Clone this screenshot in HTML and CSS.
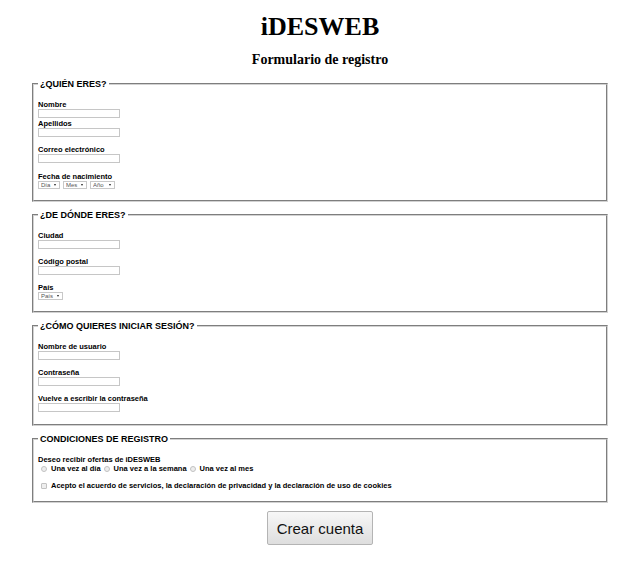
FILE: index.html
```html
<!DOCTYPE html>
<html lang="es">
<head>
<meta charset="utf-8">
<title>iDESWEB - Formulario de registro</title>
<link rel="stylesheet" href="styles.css">
</head>
<body>
<header class="top">
  <h1 class="brand">iDESWEB</h1>
  <h2 class="subtitle">Formulario de registro</h2>
</header>
<form class="form">
  <fieldset class="group">
    <legend class="group-title">¿QUIÉN ERES?</legend>
    <div class="group-body">
      <div class="field-pair">
        <div class="field">
          <label class="lbl" for="nombre">Nombre</label>
          <input class="txt" id="nombre" type="text">
        </div>
        <div class="field">
          <label class="lbl" for="apellidos">Apellidos</label>
          <input class="txt" id="apellidos" type="text">
        </div>
      </div>
      <div class="field">
        <label class="lbl" for="correo">Correo electrónico</label>
        <input class="txt" id="correo" type="email">
      </div>
      <div class="field field-date">
        <span class="lbl">Fecha de nacimiento</span>
        <div class="sel-row">
          <span class="sel sel-day"><select class="sel-input" aria-label="Día"><option>Día</option></select></span>
          <span class="sel sel-month"><select class="sel-input" aria-label="Mes"><option>Mes</option></select></span>
          <span class="sel sel-year"><select class="sel-input" aria-label="Año"><option>Año</option></select></span>
        </div>
      </div>
    </div>
  </fieldset>

  <fieldset class="group">
    <legend class="group-title">¿DE DÓNDE ERES?</legend>
    <div class="group-body">
      <div class="field">
        <label class="lbl" for="ciudad">Ciudad</label>
        <input class="txt" id="ciudad" type="text">
      </div>
      <div class="field">
        <label class="lbl" for="cp">Código postal</label>
        <input class="txt" id="cp" type="text">
      </div>
      <div class="field">
        <span class="lbl">País</span>
        <div class="sel-row">
          <span class="sel sel-country"><select class="sel-input" aria-label="País"><option>País</option></select></span>
        </div>
      </div>
    </div>
  </fieldset>

  <fieldset class="group group-login">
    <legend class="group-title">¿CÓMO QUIERES INICIAR SESIÓN?</legend>
    <div class="group-body">
      <div class="field">
        <label class="lbl" for="usuario">Nombre de usuario</label>
        <input class="txt" id="usuario" type="text">
      </div>
      <div class="field">
        <label class="lbl" for="pass">Contraseña</label>
        <input class="txt" id="pass" type="password">
      </div>
      <div class="field">
        <label class="lbl" for="pass2">Vuelve a escribir la contraseña</label>
        <input class="txt" id="pass2" type="password">
      </div>
    </div>
  </fieldset>

  <fieldset class="group">
    <legend class="group-title">CONDICIONES DE REGISTRO</legend>
    <div class="group-body terms">
      <div class="field">
        <span class="lbl">Deseo recibir ofertas de iDESWEB</span>
        <div class="choice-row">
          <label class="choice"><input class="radio" type="radio" name="ofertas">Una vez al día</label>
          <label class="choice"><input class="radio" type="radio" name="ofertas">Una vez a la semana</label>
          <label class="choice"><input class="radio" type="radio" name="ofertas">Una vez al mes</label>
        </div>
      </div>
      <label class="choice"><input class="check" type="checkbox">Acepto el acuerdo de servicios, la declaración de privacidad y la declaración de uso de cookies</label>
    </div>
  </fieldset>

  <div class="actions">
    <button class="btn" type="submit">Crear cuenta</button>
  </div>
</form>
</body>
</html>
```

FILE: styles.css
```css
html, body {
  margin: 0;
  padding: 0;
  background: #ffffff;
}

body {
  font-family: "Liberation Sans", Arial, sans-serif;
  color: #000000;
}

.top {
  text-align: center;
}

.brand {
  margin: 12px 0 0;
  font-family: "Liberation Serif", "Times New Roman", serif;
  font-weight: bold;
  font-size: 26px;
  line-height: 30px;
  color: #000;
}

.subtitle {
  margin: 10px 0 0;
  font-family: "Liberation Serif", "Times New Roman", serif;
  font-weight: bold;
  font-size: 14px;
  line-height: 16px;
  color: #000;
}

.form {
  margin: 11px 0 0;
  padding: 0 32px;
  display: flex;
  flex-direction: column;
  gap: 8px;
}

.group {
  margin: 0;
  padding: 11px 4px 11px 4px;
  border: 2px groove #d2d2d2;
  min-width: 0;
}

.group-login {
  padding-bottom: 12px;
}

.group-title {
  padding: 0 2px;
  font-size: 9px;
  line-height: 10px;
  font-weight: bold;
  color: #000;
}

.group-body {
  display: flex;
  flex-direction: column;
  gap: 8px;
}

.field-pair {
  display: flex;
  flex-direction: column;
  gap: 1px;
}

.field {
  display: flex;
  flex-direction: column;
  align-items: flex-start;
}

.field-date {
  margin-top: 1px;
}

.lbl {
  display: block;
  font-size: 7.5px;
  line-height: 9px;
  font-weight: bold;
  color: #000;
}

.txt {
  display: block;
  box-sizing: border-box;
  width: 82px;
  height: 9px;
  margin: 0;
  padding: 0;
  border: 1px solid #c6c6c6;
  background: #fff;
  font-size: 6px;
}

.sel-row {
  display: flex;
  gap: 3px;
}

.sel {
  position: relative;
  display: block;
  box-sizing: border-box;
  height: 8px;
  border: 1px solid #c8c8c8;
  background: #fff;
}

.sel::after {
  content: "";
  position: absolute;
  right: 3px;
  top: 2px;
  border-left: 1.5px solid transparent;
  border-right: 1.5px solid transparent;
  border-top: 2.5px solid #222;
}

.sel-day { width: 22px; }
.sel-month { width: 24px; }
.sel-year { width: 25px; }
.sel-country { width: 25px; }

.sel-input {
  appearance: none;
  -webkit-appearance: none;
  display: block;
  width: 100%;
  height: 6px;
  margin: 0;
  padding: 0 0 0 2px;
  border: 0;
  background: transparent;
  font-family: "Liberation Sans", Arial, sans-serif;
  font-size: 6px;
  line-height: 6px;
  color: #555;
  outline: none;
}

.terms {
  gap: 8px;
}

.choice-row {
  display: flex;
  align-items: center;
}

.choice {
  display: flex;
  align-items: center;
  font-size: 7.5px;
  line-height: 9px;
  font-weight: bold;
  color: #000;
}

.radio,
.check {
  appearance: none;
  -webkit-appearance: none;
  box-sizing: border-box;
  width: 6px;
  height: 6px;
  margin: 0 4px 0 3px;
  border: 1px solid #c2c2c2;
  background: #eeeeee;
  flex: none;
}

.radio {
  border-radius: 50%;
}

.check {
  border-radius: 1px;
}

.actions {
  display: flex;
  justify-content: center;
}

.btn {
  box-sizing: border-box;
  width: 106px;
  height: 34px;
  margin: 0;
  padding: 0;
  border: 1px solid #b4b4b4;
  border-radius: 2px;
  background: linear-gradient(#f7f7f7, #dedede);
  font-family: "Liberation Sans", Arial, sans-serif;
  font-size: 15px;
  color: #111;
}
```
